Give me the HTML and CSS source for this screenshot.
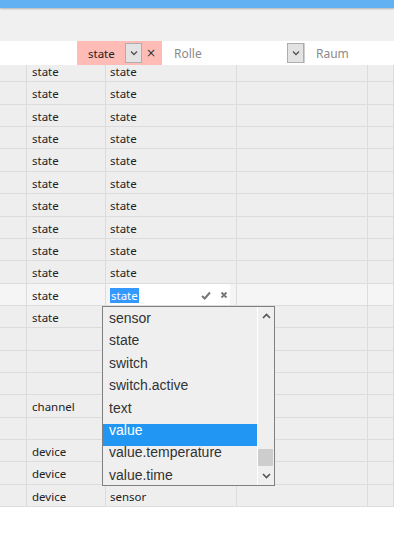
FILE: index.html
```html
<!DOCTYPE html>
<html>
<head>
<meta charset="utf-8">
<link rel="stylesheet" href="styles.css">
</head>
<body>
<div class="app">
  <div class="topbar"></div>
  <div class="toolbar"></div>
  <div class="filters">
    <div class="f-spacer"></div>
    <div class="f-cell f-pink">
      <span class="f-text">state</span>
      <span class="f-btn"><svg width="8" height="6" viewBox="0 0 8 6"><path d="M1 1.5 L4 4.5 L7 1.5" fill="none" stroke="#555" stroke-width="1.4"/></svg></span>
      <span class="f-clear">×</span>
    </div>
    <div class="f-cell f-rolle">
      <span class="f-text f-ph">Rolle</span>
      <span class="f-btn"><svg width="8" height="6" viewBox="0 0 8 6"><path d="M1 1.5 L4 4.5 L7 1.5" fill="none" stroke="#555" stroke-width="1.4"/></svg></span>
    </div>
    <div class="f-sep"></div>
    <div class="f-cell f-raum"><span class="f-text f-ph">Raum</span></div>
  </div>
  <div class="viewport">
    <div class="grid">
      <div class="row row-first"><div class="c"></div><div class="c">state</div><div class="c">state</div><div class="c"></div><div class="c"></div></div>
      <div class="row"><div class="c"></div><div class="c">state</div><div class="c">state</div><div class="c"></div><div class="c"></div></div>
      <div class="row"><div class="c"></div><div class="c">state</div><div class="c">state</div><div class="c"></div><div class="c"></div></div>
      <div class="row"><div class="c"></div><div class="c">state</div><div class="c">state</div><div class="c"></div><div class="c"></div></div>
      <div class="row"><div class="c"></div><div class="c">state</div><div class="c">state</div><div class="c"></div><div class="c"></div></div>
      <div class="row"><div class="c"></div><div class="c">state</div><div class="c">state</div><div class="c"></div><div class="c"></div></div>
      <div class="row"><div class="c"></div><div class="c">state</div><div class="c">state</div><div class="c"></div><div class="c"></div></div>
      <div class="row"><div class="c"></div><div class="c">state</div><div class="c">state</div><div class="c"></div><div class="c"></div></div>
      <div class="row"><div class="c"></div><div class="c">state</div><div class="c">state</div><div class="c"></div><div class="c"></div></div>
      <div class="row"><div class="c"></div><div class="c">state</div><div class="c">state</div><div class="c"></div><div class="c"></div></div>
      <div class="row row-edit">
        <div class="c"></div>
        <div class="c">state</div>
        <div class="c c-edit">
          <div class="editor">
            <span class="sel">state</span>
            <span class="ed-icons">
              <svg width="10" height="9" viewBox="0 0 10 9"><path d="M1 5 L3.7 7.5 L9 1.5" fill="none" stroke="#777" stroke-width="2"/></svg>
              <svg width="8" height="8" viewBox="0 0 8 8"><path d="M1.5 1.5 L6.5 6.5 M6.5 1.5 L1.5 6.5" fill="none" stroke="#777" stroke-width="1.8"/></svg>
            </span>
          </div>
        </div>
        <div class="c"></div><div class="c"></div>
      </div>
      <div class="row"><div class="c"></div><div class="c">state</div><div class="c"></div><div class="c"></div><div class="c"></div></div>
      <div class="row"><div class="c"></div><div class="c"></div><div class="c"></div><div class="c"></div><div class="c"></div></div>
      <div class="row"><div class="c"></div><div class="c"></div><div class="c"></div><div class="c"></div><div class="c"></div></div>
      <div class="row"><div class="c"></div><div class="c"></div><div class="c"></div><div class="c"></div><div class="c"></div></div>
      <div class="row"><div class="c"></div><div class="c">channel</div><div class="c"></div><div class="c"></div><div class="c"></div></div>
      <div class="row"><div class="c"></div><div class="c"></div><div class="c"></div><div class="c"></div><div class="c"></div></div>
      <div class="row"><div class="c"></div><div class="c">device</div><div class="c"></div><div class="c"></div><div class="c"></div></div>
      <div class="row"><div class="c"></div><div class="c">device</div><div class="c"></div><div class="c"></div><div class="c"></div></div>
      <div class="row"><div class="c"></div><div class="c">device</div><div class="c">sensor</div><div class="c"></div><div class="c"></div></div>
    </div>
    <div class="dropdown">
      <div class="dd-list">
        <div class="dd-item">sensor</div>
        <div class="dd-item">state</div>
        <div class="dd-item">switch</div>
        <div class="dd-item">switch.active</div>
        <div class="dd-item">text</div>
        <div class="dd-item dd-active">value</div>
        <div class="dd-item">value.temperature</div>
        <div class="dd-item">value.time</div>
      </div>
      <div class="dd-scroll">
        <span class="dd-arrow"><svg width="9" height="6" viewBox="0 0 9 6"><path d="M1 5 L4.5 1.5 L8 5" fill="none" stroke="#555" stroke-width="1.6"/></svg></span>
        <span class="dd-track"><span class="dd-thumb"></span></span>
        <span class="dd-arrow"><svg width="9" height="6" viewBox="0 0 9 6"><path d="M1 1 L4.5 4.5 L8 1" fill="none" stroke="#555" stroke-width="1.6"/></svg></span>
      </div>
    </div>
  </div>
</div>
</body>
</html>
```

FILE: styles.css
```css
* { box-sizing: border-box; }
html, body { margin: 0; padding: 0; background: #ffffff; }
body { font-family: "Noto Sans", "Open Sans", sans-serif; font-size: 11.5px; color: #222; }

.app { width: 394px; }

.topbar {
  height: 8px;
  background: #62b1f3;
  box-shadow: 0 1px 2px rgba(0,0,0,0.25);
  position: relative;
  z-index: 2;
}
.toolbar { height: 33px; background: #f0f0f0; }

.filters {
  height: 24px;
  background: #ffffff;
  display: flex;
  align-items: stretch;
}
.f-spacer { width: 77px; }
.f-cell { display: flex; align-items: center; }
.f-pink {
  width: 85px;
  background: #ffbbb6;
  padding-left: 11px;
}
.f-pink .f-text { width: 37px; color: #222; padding-top: 1px; }
.f-btn {
  width: 17px;
  height: 20px;
  border: 1px solid #adadad;
  background: #e3e3e3;
  display: flex;
  align-items: center;
  justify-content: center;
}
.f-clear { margin-left: 4px; font-size: 12px; color: #333; font-family: "DejaVu Sans", sans-serif; }
.f-rolle {
  width: 142px;
  padding-left: 12px;
}
.f-rolle .f-text { flex: 1; }
.f-ph { color: #8a8a8a; font-size: 12px; padding-top: 1px; }
.f-sep { width: 1px; margin: 2px 0; background: #cfcfcf; }
.f-raum { padding-left: 11px; }

.viewport {
  position: relative;
  height: 442px;
  overflow: hidden;
}
.row {
  display: grid;
  grid-template-columns: 27px 79px 131px 131px 1fr;
  height: 22.37px;
  background: #eeeeee;
}
.row-first { height: 17.37px; }
.c {
  border-right: 1px solid #dcdcdc;
  border-bottom: 1px solid #dcdcdc;
  padding-left: 5px;
  padding-top: 1px;
  line-height: 21px;
  white-space: nowrap;
  overflow: hidden;
}
.row-first .c { padding-top: 0; line-height: 14px; }
.c:nth-child(3) { padding-left: 4px; }
.row-edit { background: #f5f5f5; }
.c-edit { padding: 0 6px 0 0; }
.editor {
  background: #ffffff;
  height: 21px;
  display: flex;
  align-items: center;
  padding-top: 2px;
}
.sel {
  background: #3399ff;
  color: #ffffff;
  line-height: 15px;
  padding: 0 1px 0 1px;
}
.ed-icons {
  margin-left: auto;
  margin-right: 2px;
  display: flex;
  align-items: center;
  gap: 9px;
}

.dropdown {
  position: absolute;
  left: 102px;
  top: 241px;
  width: 173px;
  height: 180px;
  border: 1px solid #808080;
  background: #efefef;
  display: flex;
  overflow: hidden;
}
.dd-list {
  flex: 1;
  padding-top: 5px;
  font-family: "Liberation Sans", Arial, sans-serif;
  font-size: 14px;
  color: #333;
}
.dd-item {
  height: 22.4px;
  line-height: 13px;
  padding-left: 6px;
  white-space: nowrap;
}
.dd-active { background: #2196f3; color: #ffffff; }
.dd-scroll {
  width: 17px;
  border-left: 1px solid #ffffff;
  display: flex;
  flex-direction: column;
  align-items: center;
}
.dd-arrow { height: 18px; display: flex; align-items: center; justify-content: center; width: 100%; }
.dd-track { flex: 1; width: 100%; display: flex; flex-direction: column; justify-content: flex-end; }
.dd-thumb { height: 17px; background: #cdcdcd; margin: 0 1px 1px 0; }
```
